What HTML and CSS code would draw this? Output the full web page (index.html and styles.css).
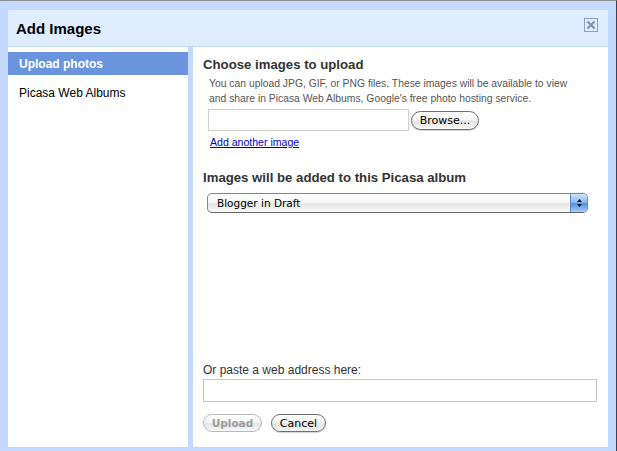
FILE: index.html
```html
<!DOCTYPE html>
<html>
<head>
<meta charset="utf-8">
<title>Add Images</title>
<link rel="stylesheet" href="styles.css">
</head>
<body>
<div class="frame">
  <header class="titlebar">
    <h1 class="title">Add Images</h1>
    <span class="close" aria-label="Close">
      <svg width="12" height="12" viewBox="0 0 12 12"><path d="M2.5 2.5 L9.5 9.5 M9.5 2.5 L2.5 9.5" stroke="#7d93bb" stroke-width="2.2" fill="none"/></svg>
    </span>
  </header>
  <div class="main">
    <nav class="sidebar">
      <div class="nav-item active">Upload photos</div>
      <div class="nav-item">Picasa Web Albums</div>
    </nav>
    <section class="content">
      <h2 class="heading h-first">Choose images to upload</h2>
      <p class="desc">You can upload JPG, GIF, or PNG files. These images will be available to view<br>and share in Picasa Web Albums, Google's free photo hosting service.</p>
      <div class="file-row">
        <input class="file-box" type="text">
        <button class="aqua browse">Browse...</button>
      </div>
      <a class="add-link" href="#">Add another image</a>
      <h2 class="heading h-second">Images will be added to this Picasa album</h2>
      <div class="select">
        <span class="select-text">Blogger in Draft</span>
        <span class="select-arrows">
          <svg width="7" height="12" viewBox="0 0 7 12"><path d="M3.5 2 L6 5 L1 5 Z M1 7 L6 7 L3.5 10 Z" fill="#1a1a1a"/></svg>
        </span>
      </div>
      <div class="bottom">
        <label class="url-label">Or paste a web address here:</label>
        <input class="url-box" type="text">
        <div class="actions">
          <button class="aqua upload" disabled>Upload</button>
          <button class="aqua cancel">Cancel</button>
        </div>
      </div>
    </section>
  </div>
</div>
</body>
</html>
```
FILE: styles.css
```css
html, body {
  margin: 0;
  padding: 0;
  background: #c3d9ff;
}
body {
  font-family: "Liberation Sans", Arial, sans-serif;
}
.frame {
  box-sizing: border-box;
  width: 617px;
  height: 451px;
  background: #c3d9ff;
  border-top: 1px solid #8c8c8c;
  border-right: 1px solid #3c3f4c;
  padding: 9px 8px 4px 8px;
  display: flex;
  flex-direction: column;
  gap: 1px;
}
.titlebar {
  flex: 0 0 36px;
  background: #e0ecff;
  display: flex;
  align-items: center;
  justify-content: space-between;
  padding: 0 10px 0 8px;
}
.title {
  margin: 0;
  font-size: 15px;
  font-weight: bold;
  color: #000;
}
.close {
  box-sizing: border-box;
  width: 14px;
  height: 14px;
  border: 1px solid #8a9fc6;
  align-self: flex-start;
  margin-top: 8px;
  display: flex;
  align-items: center;
  justify-content: center;
}
.main {
  flex: 1;
  display: flex;
  gap: 5px;
}
.sidebar {
  flex: 0 0 180px;
  background: #fff;
  padding-top: 5px;
  display: flex;
  flex-direction: column;
  gap: 6px;
}
.nav-item {
  height: 23px;
  line-height: 24px;
  padding-left: 11px;
  font-size: 12px;
  color: #000;
}
.nav-item.active {
  background: #6b94df;
  color: #fff;
  font-weight: bold;
}
.content {
  flex: 1;
  background: #fff;
  padding: 9px 11px 15px 10px;
  display: flex;
  flex-direction: column;
  align-items: flex-start;
}
.heading {
  margin: 0;
  font-size: 13.2px;
  font-weight: bold;
  color: #333;
  line-height: 17px;
}
.h-second {
  margin-top: 20px;
}
.desc {
  margin: 3px 0 0 6px;
  font-size: 10.35px;
  line-height: 15px;
  color: #555;
  white-space: nowrap;
}
.file-row {
  margin: 3px 0 0 5px;
  display: flex;
  align-items: center;
  gap: 2px;
}
.file-box {
  box-sizing: border-box;
  width: 201px;
  height: 22px;
  margin: 0;
  border: 1px solid #cfcfcf;
  background: #fff;
  padding: 0;
}
.aqua {
  box-sizing: border-box;
  margin: 0;
  padding: 0;
  border: 1px solid #6e6e6e;
  border-radius: 10px;
  background: linear-gradient(#ffffff 0%, #f6f6f6 45%, #e3e3e3 55%, #f8f8f8 100%);
  box-shadow: 0 1px 1px rgba(0, 0, 0, 0.18);
  font-family: "DejaVu Sans", sans-serif;
  font-size: 11px;
  color: #000;
  line-height: 1;
}
.browse {
  width: 68px;
  height: 19px;
}
.add-link {
  margin: 4px 0 0 7px;
  font-size: 10.56px;
  line-height: 14px;
  color: #0000cc;
  text-decoration: underline;
}
.select {
  box-sizing: border-box;
  margin: 7px 0 0 4px;
  width: 381px;
  height: 20px;
  border: 1px solid #858585;
  border-bottom-color: #666;
  border-radius: 5px;
  background: linear-gradient(#ffffff 0%, #f7f7f7 45%, #e6e6e6 55%, #fbfbfb 100%);
  display: flex;
  align-items: center;
  overflow: hidden;
}
.select-text {
  flex: 1;
  padding-left: 9px;
  font-family: "DejaVu Sans", sans-serif;
  font-size: 10.5px;
  color: #000;
}
.select-arrows {
  width: 16px;
  height: 100%;
  border-left: 1px solid #5e82bd;
  background: linear-gradient(#cfe3fb 0%, #8fbaf0 45%, #4f8fe2 55%, #a9d0fa 100%);
  display: flex;
  align-items: center;
  justify-content: center;
}
.bottom {
  margin-top: auto;
  display: flex;
  flex-direction: column;
  align-items: flex-start;
}
.url-label {
  font-size: 12px;
  line-height: 14px;
  color: #333;
}
.url-box {
  box-sizing: border-box;
  margin: 2px 0 0 0;
  width: 394px;
  height: 23px;
  border: 1px solid #c6c6c6;
  background: #fff;
  padding: 0;
}
.actions {
  margin-top: 12px;
  display: flex;
  gap: 9px;
}
.upload {
  width: 59px;
  height: 18px;
  font-weight: bold;
  font-size: 10.5px;
  color: #9c9c9c;
  border-color: #b9b9b9;
  box-shadow: none;
}
.cancel {
  width: 55px;
  height: 18px;
}
```
